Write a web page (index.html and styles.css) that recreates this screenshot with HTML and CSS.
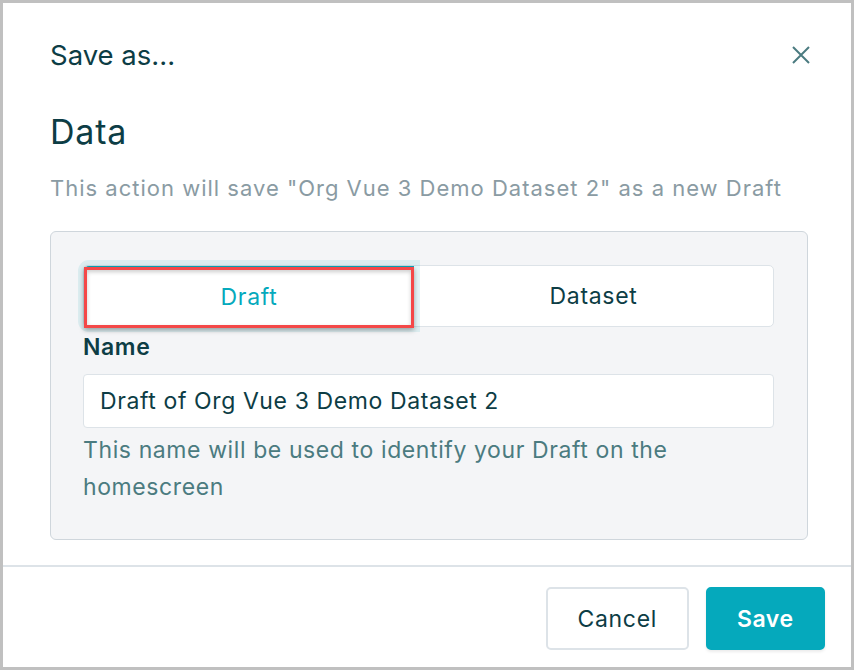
FILE: index.html
```html
<!DOCTYPE html>
<html lang="en">
<head>
  <meta charset="UTF-8">
  <title>Save as...</title>
  <meta name="viewport" content="width=device-width, initial-scale=1.0">
  <link rel="stylesheet" href="styles.css">
</head>
<body>
  <div class="dialog">
    <header class="dialog-head">
      <h2>Save as...</h2>
      <button class="close-btn" title="Close">
        <svg width="20" height="20" viewBox="0 0 20 20"><path d="M2 2 L18 18 M18 2 L2 18" stroke="currentColor" stroke-width="2" fill="none"/></svg>
      </button>
    </header>

    <div class="dialog-body">
      <h3>Data</h3>
      <p class="subtitle">This action will save "Org Vue 3 Demo Dataset 2" as a new Draft</p>

      <div class="panel">
        <div class="tabs">
          <button class="tab active">Draft</button>
          <button class="tab">Dataset</button>
          <!-- annotation box -->
          <div class="highlight"></div>
        </div>

        <label class="field-label" for="nameInput">Name</label>
        <input class="text-input" id="nameInput" type="text" value="Draft of Org Vue 3 Demo Dataset 2">
        <p class="help">This name will be used to identify your Draft on the homescreen</p>
      </div>
    </div>

    <footer class="dialog-foot">
      <button class="btn">Cancel</button>
      <button class="btn primary">Save</button>
    </footer>
  </div>
</body>
</html>
```

FILE: styles.css
```css
:root {
  --ink: #0d3d45;
  --muted: #8a9ba3;
  --help: #4b7b80;
  --teal: #05a9bc;
  --line: #dde3e8;
  --panel: #f4f5f7;
}

* {
  box-sizing: border-box;
}

body {
  margin: 0;
  font-family: Inter, 'Noto Sans', sans-serif;
  color: var(--ink);
  background: #fff;
}

.dialog {
  width: 854px;
  height: 670px;
  border: 3px solid #c0c0c0;
  background: #fff;
  display: flex;
  flex-direction: column;
}

.dialog-head {
  display: flex;
  align-items: center;
  justify-content: space-between;
  padding: 34px 40px 0 47px;
}

.dialog-head h2 {
  margin: 0;
  font-size: 27.5px;
  font-weight: 400;
  line-height: 36px;
}

.close-btn {
  border: none;
  background: none;
  padding: 0;
  width: 20px;
  height: 20px;
  color: var(--help);
  cursor: pointer;
}

.close-btn svg {
  display: block;
}

.dialog-body {
  padding: 0 43px 0 47px;
}

.dialog-body h3 {
  margin: 39px 0 0;
  font-size: 34px;
  font-weight: 400;
  letter-spacing: .8px;
  line-height: 40px;
}

.subtitle {
  margin: 22px 0 0;
  font-size: 22px;
  letter-spacing: 1px;
  line-height: 28px;
  color: var(--muted);
}

.panel {
  margin-top: 29px;
  background: var(--panel);
  border: 1px solid #cfd6dc;
  border-radius: 6px;
  padding: 33px 33px 33px 32px;
}

.tabs {
  position: relative;
  display: flex;
  height: 62px;
  background: #fff;
  border: 1px solid var(--line);
  border-radius: 5px;
}

.tab {
  flex: 1;
  border: none;
  background: none;
  font-family: inherit;
  font-size: 23px;
  letter-spacing: .7px;
  color: var(--ink);
  cursor: pointer;
}

.tab.active {
  flex: 0 0 330px;
  color: var(--teal);
  border-top: 2px solid var(--teal);
  border-radius: 5px 0 0 5px;
  box-shadow: 0 0 0 6px rgba(5, 169, 188, .1);
}

.highlight {
  position: absolute;
  left: 0;
  top: 1px;
  width: 330px;
  height: 61px;
  border: 3px solid #f44848;
  box-shadow: 0 2px 5px rgba(0, 0, 0, .35), inset 0 2px 4px rgba(0, 0, 0, .2);
  pointer-events: none;
}

.field-label {
  display: block;
  margin-top: 5px;
  font-size: 23px;
  font-weight: 600;
  letter-spacing: .6px;
  line-height: 30px;
}

.text-input {
  display: block;
  width: 100%;
  height: 54px;
  margin-top: 12px;
  padding: 0 16px;
  border: 1px solid var(--line);
  border-radius: 4px;
  background: #fff;
  font-family: inherit;
  font-size: 23px;
  letter-spacing: .6px;
  color: var(--ink);
}

.help {
  margin: 4px 0 0;
  font-size: 23px;
  letter-spacing: .6px;
  line-height: 37px;
  color: var(--help);
}

.dialog-foot {
  margin-top: auto;
  border-top: 2px solid var(--line);
  display: flex;
  justify-content: flex-end;
  gap: 17px;
  padding: 20px 26px 17px 0;
}

.btn {
  height: 63px;
  padding: 0 29.5px;
  border: 2px solid var(--line);
  border-radius: 5px;
  background: #fff;
  font-family: inherit;
  font-size: 23px;
  letter-spacing: .7px;
  color: var(--ink);
  cursor: pointer;
}

.btn.primary {
  background: var(--teal);
  border-color: var(--teal);
  color: #fff;
  font-weight: 600;
  letter-spacing: .5px;
  box-shadow: 0 2px 3px rgba(0, 0, 0, .08);
}
```
